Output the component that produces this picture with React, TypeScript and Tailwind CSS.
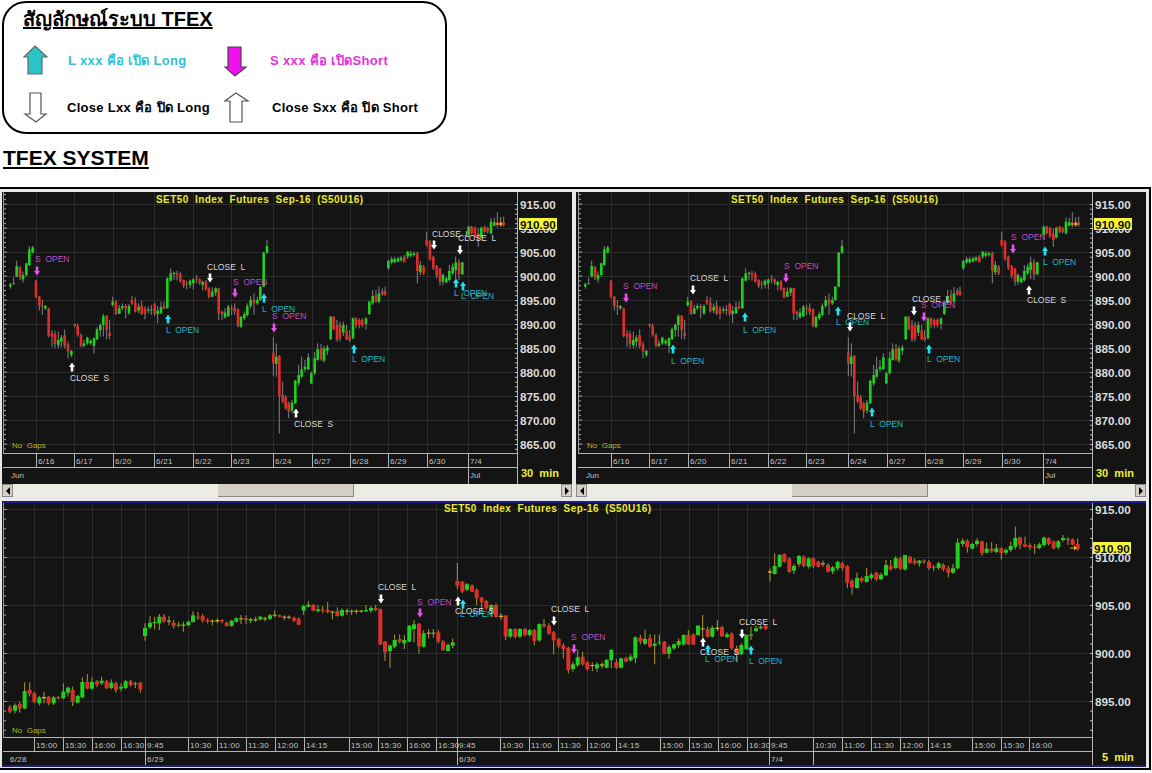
type Candle = [number, number, number, number, number, string];
type Mark = [string, number, number, number, number];

// candle rows are x, body top, body bottom, wick top, wick bottom, colour, measured on a 3x crop
const fromCrop = (rows: Candle[], ox: number, oy: number): Candle[] =>
  rows.map(([x, t, b, h, l, c]) => [ox + x / 3, oy + t / 3, oy + b / 3, oy + h / 3, oy + l / 3, c]);

const dailyCandles: Candle[] = [
  ...fromCrop(
    [
      [31, 133, 140, 128, 146, "g"], [41, 130, 131, 112, 132, "g"], [50, 78, 110, 62, 112, "g"], [60, 82, 112, 78, 120, "r"],
      [69, 105, 118, 95, 128, "g"], [79, 70, 105, 68, 110, "g"], [88, 28, 75, 18, 78, "g"], [98, 22, 38, 18, 40, "g"],
      [108, 122, 172, 120, 175, "r"], [118, 170, 198, 168, 212, "r"], [127, 197, 199, 180, 225, "r"], [136, 198, 205, 195, 210, "g"],
      [146, 205, 288, 203, 292, "r"], [156, 280, 290, 270, 322, "r"], [165, 282, 312, 272, 325, "r"], [175, 300, 316, 275, 325, "g"],
      [184, 293, 305, 285, 322, "g"], [194, 285, 318, 268, 325, "r"], [204, 313, 334, 305, 355, "r"], [214, 333, 345, 330, 352, "g"],
      [224, 253, 258, 250, 262, "r"], [233, 258, 285, 250, 290, "r"], [243, 285, 318, 280, 322, "r"], [252, 310, 318, 300, 322, "g"],
      [262, 293, 310, 290, 315, "g"], [272, 302, 310, 298, 315, "g"], [282, 295, 318, 292, 340, "g"], [291, 268, 298, 262, 300, "g"],
      [301, 255, 270, 250, 290, "g"], [310, 228, 255, 222, 290, "g"], [320, 228, 270, 225, 298, "r"], [329, 278, 288, 240, 298, "r"],
      [338, 185, 195, 170, 200, "g"], [348, 185, 222, 180, 225, "r"], [358, 205, 222, 195, 222, "g"], [367, 198, 205, 190, 210, "g"],
      [377, 198, 205, 192, 235, "r"], [387, 198, 220, 192, 225, "g"], [396, 180, 190, 168, 195, "r"], [406, 188, 215, 172, 218, "r"],
      [416, 200, 212, 190, 220, "g"], [425, 196, 222, 182, 225, "r"], [435, 205, 222, 198, 238, "r"], [445, 208, 212, 200, 220, "g"],
      [454, 208, 211, 195, 225, "g"], [464, 192, 222, 188, 228, "r"], [473, 212, 222, 198, 250, "g"], [483, 202, 220, 185, 222, "g"],
      [492, 198, 205, 185, 208, "r"], [502, 115, 205, 112, 206, "g"], [512, 100, 122, 85, 125, "g"], [522, 98, 102, 95, 120, "g"],
      [531, 100, 105, 92, 122, "r"], [541, 102, 125, 95, 128, "r"], [551, 120, 138, 118, 145, "r"], [560, 130, 132, 122, 148, "r"],
      [570, 122, 135, 118, 145, "g"], [580, 118, 130, 115, 148, "g"], [590, 115, 118, 105, 130, "r"], [599, 118, 128, 115, 135, "r"],
      [608, 125, 135, 122, 152, "g"], [618, 125, 148, 120, 152, "r"], [627, 145, 172, 142, 175, "r"], [637, 155, 170, 142, 172, "g"],
      [647, 145, 158, 142, 168, "g"], [656, 145, 220, 143, 240, "r"], [666, 215, 222, 212, 240, "r"], [675, 218, 232, 205, 236, "g"],
      [685, 200, 228, 195, 232, "g"], [695, 205, 208, 195, 225, "r"], [704, 203, 215, 190, 225, "r"], [714, 208, 258, 205, 262, "r"],
      [723, 230, 260, 228, 264, "g"], [733, 222, 235, 215, 240, "g"], [742, 198, 225, 190, 230, "g"], [752, 180, 198, 168, 205, "g"],
      [762, 178, 190, 160, 225, "r"], [772, 180, 190, 170, 195, "g"], [781, 140, 180, 138, 182, "g"], [791, 38, 140, 35, 142, "g"],
      [801, 18, 38, 0, 42, "g"], [820, 338, 370, 292, 408, "r"], [829, 350, 372, 310, 410, "g"], [838, 348, 468, 345, 580, "r"],
      [848, 465, 485, 425, 490, "r"], [857, 472, 505, 465, 510, "r"], [866, 490, 515, 485, 535, "r"], [876, 488, 512, 480, 520, "g"],
      [886, 422, 490, 420, 492, "g"], [896, 405, 430, 375, 438, "g"], [905, 388, 410, 350, 415, "g"], [915, 380, 388, 360, 395, "g"],
      [925, 352, 388, 340, 390, "g"], [934, 400, 430, 395, 432, "g"], [944, 355, 400, 335, 405, "g"], [953, 328, 360, 310, 362, "g"],
      [963, 325, 358, 312, 362, "r"], [972, 325, 362, 318, 368, "g"], [982, 322, 332, 315, 345, "g"], [992, 230, 298, 228, 300, "g"],
      [1001, 230, 268, 228, 270, "r"], [1011, 255, 300, 240, 305, "r"], [1020, 255, 295, 245, 305, "r"], [1030, 255, 278, 245, 288, "g"],
      [1040, 272, 298, 255, 300, "r"], [1049, 290, 300, 270, 305, "r"], [1059, 235, 295, 232, 298, "g"], [1068, 235, 255, 232, 265, "r"],
      [1078, 240, 255, 235, 265, "r"], [1087, 240, 255, 235, 262, "r"], [1098, 235, 252, 232, 268, "g"], [1108, 185, 222, 182, 225, "g"],
      [1118, 168, 190, 150, 195, "g"], [1128, 165, 185, 150, 188, "r"], [1137, 160, 185, 140, 190, "g"],
    ],
    0,
    240
  ),
  ...fromCrop(
    [
      [277, 318, 328, 310, 332, "r"], [285, 318, 330, 305, 332, "r"], [295, 228, 250, 225, 255, "g"], [305, 222, 232, 215, 238, "g"],
      [314, 222, 232, 215, 235, "g"], [324, 220, 230, 215, 232, "g"], [333, 218, 226, 212, 230, "g"], [343, 215, 232, 210, 232, "r"],
      [353, 200, 215, 198, 222, "g"], [362, 205, 212, 198, 218, "g"], [372, 205, 210, 200, 215, "g"], [382, 205, 258, 200, 295, "r"],
      [391, 240, 262, 228, 270, "g"], [401, 245, 265, 240, 270, "r"], [410, 165, 180, 140, 185, "r"], [420, 170, 222, 165, 228, "r"],
      [430, 215, 250, 212, 255, "r"], [440, 242, 272, 240, 280, "r"], [450, 250, 290, 248, 302, "r"], [459, 270, 290, 265, 300, "g"],
      [469, 280, 292, 275, 295, "g"], [478, 258, 285, 240, 290, "g"], [488, 245, 265, 235, 270, "g"], [497, 232, 255, 215, 282, "g"],
      [507, 232, 268, 222, 285, "r"], [517, 232, 268, 230, 270, "g"], [536, 125, 150, 122, 152, "g"], [545, 125, 145, 122, 148, "r"],
      [555, 128, 155, 125, 158, "r"], [565, 145, 165, 130, 186, "r"], [574, 128, 158, 125, 160, "g"], [584, 125, 140, 122, 145, "r"],
      [593, 130, 140, 125, 145, "r"], [603, 110, 145, 98, 148, "g"], [613, 112, 122, 98, 125, "g"], [622, 112, 120, 82, 128, "r"],
      [632, 112, 120, 96, 125, "r"], [641, 112, 120, 95, 125, "r"],
    ],
    290,
    185
  ),
];

const intradayCandles: Candle[] = [
  ...fromCrop(
    [
      [30, 352, 365, 345, 370, "r"], [45, 346, 362, 340, 370, "g"], [59, 342, 356, 335, 368, "r"], [74, 303, 355, 277, 358, "g"],
      [89, 300, 312, 277, 320, "r"], [103, 310, 336, 305, 340, "r"], [118, 322, 340, 318, 346, "g"], [132, 321, 325, 305, 340, "y"],
      [146, 320, 340, 318, 346, "r"], [161, 322, 340, 318, 345, "g"], [175, 322, 326, 318, 328, "r"], [190, 305, 325, 280, 328, "g"],
      [204, 293, 308, 290, 320, "g"], [218, 300, 336, 290, 348, "r"], [233, 318, 338, 315, 340, "g"], [247, 276, 322, 262, 325, "g"],
      [262, 275, 296, 252, 298, "r"], [276, 276, 296, 262, 300, "g"], [291, 274, 284, 270, 292, "r"], [305, 272, 280, 260, 285, "g"],
      [320, 274, 295, 270, 298, "r"], [334, 278, 294, 268, 298, "g"], [348, 280, 300, 275, 308, "r"], [363, 290, 296, 280, 304, "g"],
      [377, 274, 294, 270, 298, "g"], [392, 274, 285, 270, 290, "r"], [406, 280, 283, 275, 294, "g"], [421, 278, 299, 275, 308, "r"],
      [435, 114, 138, 100, 152, "g"], [450, 98, 112, 78, 118, "g"], [464, 96, 100, 80, 118, "g"], [478, 80, 100, 72, 120, "g"],
      [492, 80, 94, 72, 98, "r"], [507, 92, 94, 78, 106, "y"], [521, 98, 108, 90, 116, "r"], [536, 104, 106, 95, 112, "g"],
      [550, 104, 106, 95, 125, "y"], [565, 95, 106, 92, 108, "g"], [579, 76, 96, 64, 98, "g"], [594, 80, 82, 66, 90, "r"],
      [608, 78, 92, 72, 98, "r"], [623, 90, 94, 85, 100, "r"], [637, 92, 95, 88, 106, "y"], [652, 90, 94, 85, 100, "y"],
      [666, 90, 94, 88, 100, "r"], [680, 98, 108, 95, 110, "r"], [695, 92, 108, 90, 110, "g"], [709, 85, 95, 82, 98, "g"],
      [723, 85, 88, 75, 102, "y"], [738, 85, 90, 76, 102, "r"], [752, 87, 92, 84, 100, "g"], [767, 88, 90, 80, 96, "y"],
      [781, 80, 88, 78, 92, "g"], [795, 85, 88, 80, 94, "y"], [810, 76, 86, 72, 90, "g"], [824, 74, 78, 62, 82, "g"],
      [839, 76, 80, 74, 82, "r"], [853, 80, 82, 76, 90, "y"], [867, 80, 82, 76, 88, "y"], [882, 84, 92, 80, 96, "r"],
      [896, 86, 104, 82, 106, "r"], [911, 48, 62, 44, 75, "g"], [925, 44, 50, 34, 52, "g"], [940, 44, 62, 42, 64, "r"],
      [954, 58, 63, 45, 68, "g"], [968, 58, 62, 48, 70, "r"], [983, 60, 66, 36, 70, "r"], [997, 65, 68, 62, 88, "y"],
      [1012, 63, 78, 52, 80, "r"], [1026, 60, 77, 55, 80, "g"], [1041, 62, 64, 55, 75, "y"], [1055, 62, 66, 58, 75, "g"],
      [1069, 62, 65, 58, 72, "y"], [1084, 62, 65, 60, 68, "y"], [1098, 60, 64, 45, 66, "g"], [1113, 54, 62, 48, 68, "g"],
      [1127, 54, 60, 45, 64, "r"],
    ],
    0,
    590
  ),
  ...fromCrop(
    [
      [31, 163, 268, 160, 270, "r"], [45, 260, 292, 258, 318, "r"], [60, 272, 288, 268, 338, "g"], [74, 255, 275, 238, 280, "g"],
      [89, 252, 260, 238, 265, "r"], [103, 255, 265, 240, 282, "g"], [118, 212, 260, 210, 262, "g"], [132, 208, 222, 196, 262, "g"],
      [147, 206, 274, 205, 296, "r"], [161, 235, 275, 225, 278, "g"], [176, 233, 236, 222, 250, "y"], [190, 233, 236, 222, 248, "y"],
      [205, 232, 260, 225, 265, "r"], [219, 260, 285, 255, 288, "r"], [234, 270, 288, 265, 290, "g"], [248, 262, 272, 250, 280, "g"],
      [262, 78, 92, 24, 102, "r"], [277, 80, 110, 78, 115, "r"], [291, 88, 104, 84, 108, "g"], [306, 92, 110, 88, 112, "r"],
      [320, 105, 130, 100, 150, "r"], [335, 128, 142, 125, 170, "r"], [349, 138, 160, 135, 165, "r"], [364, 150, 168, 148, 185, "g"],
      [378, 150, 186, 145, 188, "r"], [393, 182, 186, 175, 195, "y"], [407, 182, 245, 180, 255, "r"], [421, 222, 245, 220, 250, "g"],
      [436, 222, 245, 220, 250, "r"], [450, 222, 245, 220, 250, "g"], [465, 222, 240, 218, 245, "r"], [479, 225, 240, 222, 245, "g"],
      [493, 226, 258, 222, 270, "r"], [508, 207, 256, 205, 260, "g"], [522, 208, 214, 192, 218, "r"], [537, 212, 236, 205, 240, "r"],
      [551, 232, 256, 228, 298, "r"], [566, 252, 274, 248, 280, "r"], [580, 272, 282, 265, 310, "r"], [595, 278, 346, 275, 355, "r"],
      [609, 328, 342, 320, 350, "g"], [623, 307, 330, 285, 335, "g"], [638, 305, 328, 290, 332, "r"], [652, 322, 342, 318, 346, "r"],
      [667, 330, 333, 322, 348, "y"], [681, 328, 340, 322, 350, "g"], [696, 328, 332, 322, 340, "y"], [710, 315, 338, 312, 340, "g"],
      [724, 285, 315, 282, 340, "g"], [739, 322, 338, 312, 342, "r"], [753, 310, 338, 308, 340, "g"], [768, 310, 320, 305, 322, "r"],
      [782, 305, 316, 298, 320, "g"], [796, 247, 310, 244, 325, "g"], [811, 248, 260, 240, 268, "r"], [825, 252, 266, 224, 270, "g"],
      [840, 250, 275, 238, 278, "r"], [854, 266, 273, 238, 328, "g"], [868, 262, 265, 238, 270, "g"], [883, 260, 297, 258, 298, "r"],
      [897, 276, 296, 270, 312, "g"], [912, 268, 280, 265, 285, "g"], [926, 258, 270, 250, 278, "g"], [941, 240, 268, 238, 272, "g"],
      [955, 240, 268, 225, 270, "r"], [970, 238, 268, 235, 270, "r"], [984, 212, 240, 210, 242, "g"], [998, 220, 222, 180, 248, "y"],
      [1013, 222, 245, 215, 248, "r"], [1027, 218, 245, 212, 248, "g"], [1042, 218, 222, 195, 228, "y"], [1056, 216, 244, 212, 246, "r"],
      [1071, 238, 246, 232, 250, "g"], [1085, 236, 280, 232, 284, "r"], [1100, 280, 298, 272, 320, "r"], [1114, 270, 298, 265, 300, "g"],
      [1129, 240, 282, 238, 285, "g"], [1143, 238, 242, 215, 255, "g"], [1158, 220, 228, 212, 230, "g"], [1172, 215, 220, 210, 224, "g"],
      [1187, 212, 222, 208, 225, "r"],
    ],
    370,
    555
  ),
  ...fromCrop(
    [
      [30, 214, 218, 205, 245, "y"], [44, 198, 222, 160, 224, "g"], [59, 165, 200, 162, 202, "g"], [73, 162, 186, 160, 188, "r"],
      [88, 176, 216, 172, 218, "r"], [102, 198, 212, 192, 222, "g"], [117, 168, 192, 165, 200, "g"], [131, 170, 198, 166, 202, "r"],
      [146, 175, 200, 172, 206, "g"], [160, 175, 198, 172, 204, "r"], [175, 185, 200, 182, 202, "r"], [189, 190, 193, 182, 200, "y"],
      [204, 195, 215, 190, 218, "r"], [218, 202, 214, 198, 222, "g"], [233, 186, 205, 182, 212, "g"], [247, 190, 204, 185, 212, "r"],
      [262, 198, 248, 196, 265, "r"], [276, 242, 262, 238, 284, "r"], [291, 234, 264, 218, 266, "g"], [305, 234, 243, 230, 248, "r"],
      [320, 228, 246, 204, 248, "g"], [334, 224, 234, 218, 240, "g"], [349, 218, 238, 215, 244, "r"], [363, 224, 238, 218, 240, "g"],
      [378, 195, 226, 180, 228, "g"], [392, 197, 208, 180, 212, "r"], [407, 175, 204, 168, 208, "g"], [421, 175, 206, 170, 210, "r"],
      [435, 165, 208, 165, 212, "g"], [450, 170, 188, 168, 192, "r"], [464, 182, 190, 175, 195, "r"], [478, 182, 190, 180, 200, "g"],
      [492, 182, 186, 178, 192, "r"], [507, 186, 204, 180, 210, "r"], [521, 200, 204, 195, 212, "r"], [536, 190, 204, 186, 210, "g"],
      [550, 195, 208, 190, 214, "r"], [565, 205, 218, 198, 232, "r"], [579, 205, 218, 192, 222, "g"], [593, 128, 205, 115, 208, "g"],
      [608, 122, 132, 115, 140, "g"], [622, 122, 142, 118, 158, "r"], [637, 132, 146, 128, 148, "g"], [651, 122, 132, 115, 140, "g"],
      [666, 124, 160, 122, 168, "r"], [680, 146, 158, 128, 160, "g"], [695, 146, 154, 126, 158, "r"], [709, 145, 156, 132, 160, "g"],
      [724, 145, 160, 142, 178, "r"], [738, 150, 158, 145, 164, "g"], [752, 138, 150, 125, 155, "g"], [766, 114, 140, 80, 148, "g"],
      [780, 112, 134, 110, 148, "r"], [795, 133, 140, 110, 142, "r"], [810, 136, 142, 130, 150, "r"], [824, 140, 144, 132, 162, "r"],
      [838, 133, 144, 128, 148, "g"], [852, 113, 135, 110, 140, "g"], [866, 115, 132, 112, 136, "r"], [881, 124, 145, 122, 148, "r"],
      [895, 124, 142, 120, 148, "g"], [909, 114, 120, 105, 125, "g"], [924, 116, 120, 112, 135, "r"], [938, 118, 134, 115, 136, "r"],
      [953, 132, 148, 115, 152, "r"],
    ],
    760,
    500
  ),
];

// label, label x, label y, arrow x, arrow y
const leftMarks: Mark[] = [
  ["S  OPEN", 35, 262, 37, 271], ["CLOSE  S", 70, 381, 72, 367], ["L  OPEN", 166, 333, 168, 319],
  ["CLOSE  L", 207, 270, 210, 278], ["S  OPEN", 233, 285, 235, 293], ["L  OPEN", 262, 312, 264, 298],
  ["S  OPEN", 272, 319, 274, 328], ["CLOSE  S", 294, 427, 296, 413], ["L  OPEN", 352, 362, 354, 349],
  ["CLOSE  L", 432, 237, 434, 245], ["CLOSE  L", 458, 241, 460, 250], ["L  OPEN", 454, 296, 456, 283],
  ["L  OPEN", 461, 299, 463, 286],
];

const rightMarks: Mark[] = [
  ["S  OPEN", 48, 289, 51, 298], ["L  OPEN", 96, 364, 98, 349], ["CLOSE  L", 115, 281, 118, 290],
  ["L  OPEN", 168, 333, 170, 317], ["S  OPEN", 209, 269, 211, 278], ["L  OPEN", 261, 325, 263, 311],
  ["CLOSE  L", 272, 319, 275, 327], ["L  OPEN", 295, 427, 297, 412], ["CLOSE  L", 337, 302, 339, 311],
  ["S  OPEN", 346, 308, 349, 317], ["L  OPEN", 352, 362, 354, 349], ["S  OPEN", 436, 240, 438, 249],
  ["L  OPEN", 468, 265, 470, 251], ["CLOSE  S", 452, 303, 454, 290],
];

const bottomMarks: Mark[] = [
  ["CLOSE  L", 378, 590, 381, 599], ["S  OPEN", 417, 605, 420, 613], ["CLOSE  S", 455, 614, 458, 601],
  ["L  OPEN", 460, 617, 463, 604], ["CLOSE  L", 551, 612, 554, 621], ["S  OPEN", 571, 640, 574, 649],
  ["CLOSE  S", 700, 655, 703, 642], ["L  OPEN", 705, 662, 708, 649], ["CLOSE  L", 739, 625, 742, 634],
  ["L  OPEN", 749, 664, 751, 650],
];

const dayTicks = [
  [36, "6/16"], [74, "6/17"], [113, "6/20"], [154, "6/21"], [193, "6/22"], [231, "6/23"],
  [273, "6/24"], [312, "6/27"], [350, "6/28"], [388, "6/29"], [427, "6/30"], [468, "7/4"],
] as const;

const timeTicks = [
  [34, "15:00"], [63, "15:30"], [92, "16:00"], [121, "16:30"], [145, "9:45"], [188, "10:30"], [217, "11:00"],
  [246, "11:30"], [275, "12:00"], [304, "14:15"], [349, "15:00"], [378, "15:30"], [407, "16:00"], [436, "16:30"],
  [457, "9:45"], [500, "10:30"], [529, "11:00"], [558, "11:30"], [587, "12:00"], [616, "14:15"], [660, "15:00"],
  [689, "15:30"], [718, "16:00"], [747, "16:30"], [769, "9:45"], [813, "10:30"], [842, "11:00"], [871, "11:30"],
  [900, "12:00"], [928, "14:15"], [972, "15:00"], [1001, "15:30"], [1029, "16:00"],
] as const;

const dateTicks = [[145, "6/29"], [457, "6/30"], [769, "7/4"], [813, ""]] as const;

const Candles = ({ data, width, wick }: { data: Candle[]; width: number; wick: string }) => (
  <g>
    {data.map(([x, t, b, h, l, c], i) => (
      <g key={i}>
        <rect x={x - 0.5} y={h} width={1} height={l - h} fill={wick} />
        <rect
          x={x - width / 2}
          y={t}
          width={width}
          height={Math.max(b - t, 1)}
          fill={c === "g" ? "#1fd01f" : c === "r" ? "#dd2f29" : "#c9b92f"}
        />
      </g>
    ))}
  </g>
);

const markColor = (label: string) =>
  label.startsWith("S") ? ["#bb4fc4", "#f04ff0"] : label.startsWith("L") ? ["#1eb6c6", "#1fe3f2"] : ["#d9d9d9", "#ffffff"];

const Marks = ({ marks }: { marks: Mark[] }) => (
  <g>
    {marks.map(([label, tx, ty, ax, ay], i) => {
      const [textColor, arrowColor] = markColor(label);
      const down = !label.startsWith("L") && (label.startsWith("S") || label.endsWith("L"));
      const d = down ? 1 : -1;
      return (
        <g key={i}>
          <text x={tx} y={ty} fill={textColor} className="whitespace-pre text-[8.5px]">
            {label}
          </text>
          <polygon
            fill={arrowColor}
            points={[
              [ax - 1.3, ay - 4.5 * d],
              [ax + 1.3, ay - 4.5 * d],
              [ax + 1.3, ay],
              [ax + 3, ay],
              [ax, ay + 4.5 * d],
              [ax - 3, ay],
              [ax - 1.3, ay],
            ]
              .map((p) => p.join(","))
              .join(" ")}
          />
        </g>
      );
    })}
  </g>
);

const PriceAxis = ({ x, top, scale, prices, minorStep, bottom }: { x: number; top: number; scale: number; prices: number[]; minorStep: number; bottom: number }) => {
  const ticks: number[] = [];
  for (let y = top; y < bottom; y += minorStep) ticks.push(y);
  return (
    <g>
      {ticks.map((y) => (
        <rect key={y} x={x - 2} y={y} width={3} height={1} fill="#bdbdbd" />
      ))}
      {prices.map((p) => {
        const y = top + (915 - p) * scale;
        return (
          <text key={p} x={x + 3} y={y + 4.5} fill="#dcdcdc" className="text-[11.7px] font-bold">
            {p.toFixed(2)}
          </text>
        );
      })}
    </g>
  );
};

const LastPrice = ({ x, y }: { x: number; y: number }) => (
  <g>
    <rect x={x - 23} y={y - 0.5} width={5} height={1} fill="#c9b92f" />
    <polygon points={`${x - 19},${y - 2.5} ${x - 16},${y} ${x - 19},${y + 2.5}`} fill="#c9b92f" />
    <rect x={x} y={y - 6} width={38} height={12} fill="#f5f53a" />
    <text x={x + 1} y={y + 4.5} fill="#111111" className="text-[11.7px] font-bold">
      910.90
    </text>
  </g>
);

const DailyChart = ({ marks, viewBox }: { marks: Mark[]; viewBox: string }) => {
  const prices = [915, 910, 905, 900, 895, 890, 885, 880, 875, 870, 865];
  return (
    <svg viewBox={viewBox} className="block h-[292px] w-[570px]">
      {prices.map((p) => (
        <rect key={p} x={4} y={204 + (915 - p) * 4.8} width={513} height={1} fill="#2c2c2c" />
      ))}
      {dayTicks.map(([x]) => (
        <rect key={x} x={x} y={192} width={1} height={261} fill="#2c2c2c" />
      ))}
      <rect x={3} y={192} width={1} height={261} fill="#9a9a9a" />
      {Array.from({ length: 54 }, (_, i) => (
        <rect key={i} x={4} y={194 + i * 4.8} width={i % 5 === 2 ? 3 : 2} height={1} fill="#a8a8a8" />
      ))}
      <text x={156} y={203} fill="#e9e92f" textLength={207} lengthAdjust="spacing" className="whitespace-pre text-[10px] font-bold">
        SET50  Index  Futures  Sep-16  (S50U16)
      </text>
      <text x={12} y={448} fill="#b5b522" className="whitespace-pre text-[8px]">
        No  Gaps
      </text>
      <Candles data={dailyCandles} width={2.6} wick="#808080" />
      <Marks marks={marks} />
      <rect x={3} y={453} width={514} height={1} fill="#b4b4b4" />
      <rect x={3} y={467} width={514} height={1} fill="#b4b4b4" />
      {dayTicks.map(([x, label]) => (
        <g key={label}>
          <rect x={x} y={453} width={1} height={14} fill="#b4b4b4" />
          <text x={x + 2} y={464} fill="#c4c4c4" className="text-[8px] tracking-[0.3px]">
            {label}
          </text>
        </g>
      ))}
      <text x={11} y={478} fill="#c4c4c4" className="text-[8px]">
        Jun
      </text>
      <rect x={468} y={468} width={1} height={16} fill="#b4b4b4" />
      <text x={470} y={478} fill="#c4c4c4" className="text-[8px]">
        Jul
      </text>
      <rect x={517} y={192} width={1} height={292} fill="#b4b4b4" />
      <PriceAxis x={517} top={204} scale={4.8} prices={prices} minorStep={4.8} bottom={450} />
      <LastPrice x={519} y={224} />
      <text x={521} y={477} fill="#efef33" className="whitespace-pre text-[11px] font-bold">
        30  min
      </text>
    </svg>
  );
};

const IntradayChart = () => {
  const prices = [915, 910, 905, 900, 895];
  return (
    <svg viewBox="2 503 1144 262" className="block h-[262px] w-[1144px]">
      {prices.map((p) => (
        <rect key={p} x={4} y={509 + (915 - p) * 9.6} width={1088} height={1} fill="#2c2c2c" />
      ))}
      {timeTicks.map(([x]) => (
        <rect key={x} x={x} y={503} width={1} height={234} fill="#2c2c2c" />
      ))}
      <rect x={3} y={503} width={1} height={234} fill="#9a9a9a" />
      {Array.from({ length: 24 }, (_, i) => (
        <rect key={i} x={4} y={509 + i * 9.6} width={i % 5 === 0 ? 3 : 2} height={1} fill="#a8a8a8" />
      ))}
      <text x={444} y={512} fill="#e9e92f" textLength={207} lengthAdjust="spacing" className="whitespace-pre text-[10px] font-bold">
        SET50  Index  Futures  Sep-16  (S50U16)
      </text>
      <text x={12} y={733} fill="#b5b522" className="whitespace-pre text-[8px]">
        No  Gaps
      </text>
      <Candles data={intradayCandles} width={4} wick="#a99a2c" />
      <Marks marks={bottomMarks} />
      <rect x={3} y={737} width={1089} height={1} fill="#b4b4b4" />
      <rect x={3} y={751} width={1089} height={1} fill="#b4b4b4" />
      {timeTicks.map(([x, label]) => (
        <g key={x}>
          <rect x={x} y={737} width={1} height={14} fill="#b4b4b4" />
          <text x={x + 2} y={748} fill="#c4c4c4" className="text-[8px] tracking-[0.3px]">
            {label}
          </text>
        </g>
      ))}
      <text x={10} y={762} fill="#c4c4c4" className="text-[8px] tracking-[0.3px]">
        6/28
      </text>
      {dateTicks.map(([x, label]) => (
        <g key={x}>
          <rect x={x} y={752} width={1} height={13} fill="#b4b4b4" />
          <text x={x + 2} y={762} fill="#c4c4c4" className="text-[8px] tracking-[0.3px]">
            {label}
          </text>
        </g>
      ))}
      <rect x={1092} y={503} width={1} height={262} fill="#b4b4b4" />
      <PriceAxis x={1092} top={509} scale={9.6} prices={prices} minorStep={9.6} bottom={737} />
      <LastPrice x={1093} y={548} />
      <text x={1102} y={761} fill="#efef33" className="whitespace-pre text-[11px] font-bold">
        5  min
      </text>
    </svg>
  );
};

const Scrollbar = () => (
  <div className="flex h-[13px] bg-[#ecebe4]">
    <div className="flex w-[11px] items-center justify-center border border-[#8a8a84] bg-[#d4d0c8] text-[#111]">
      <div className="h-0 w-0 border-y-[4px] border-r-[4px] border-y-transparent border-r-black" />
    </div>
    <div className="ml-[205px] h-full w-[136px] border-r border-b border-[#8a8a84] bg-[#d4d0c8]" />
    <div className="ml-auto flex w-[11px] items-center justify-center border border-[#8a8a84] bg-[#d4d0c8]">
      <div className="h-0 w-0 border-y-[4px] border-l-[4px] border-y-transparent border-l-black" />
    </div>
  </div>
);

const Panel = ({ marks, viewBox }: { marks: Mark[]; viewBox: string }) => (
  <div className="h-[305px] w-[570px] bg-[#141414]">
    <DailyChart marks={marks} viewBox={viewBox} />
    <Scrollbar />
  </div>
);

const BlockArrow = ({ points, fill, stroke }: { points: string; fill: string; stroke: string }) => (
  <svg viewBox="0 0 26 32" className="h-8 w-[26px]">
    <polygon points={points} fill={fill} stroke={stroke} strokeWidth="1.2" />
  </svg>
);

export default function App() {
  return (
    <div className="h-[773px] w-[1152px] overflow-hidden bg-white pt-px font-['Liberation_Sans','Noto_Sans',sans-serif] text-black">
      <div className="ml-[2px] h-[133px] w-[445px] rounded-[24px] border-2 border-black pl-[19px]">
        <div className="mt-[3px] h-[26px] text-[20px] leading-[26px] font-bold underline">สัญลักษณ์ระบบ TFEX</div>
        <div className="mt-[13px] grid grid-cols-[45px_156px_46px_1fr] items-center text-[13px] font-bold tracking-[0.35px]">
          <BlockArrow points="12,1 24,12 19,12 19,29 5,29 5,12 0.8,12" fill="#2cc4c8" stroke="#666" />
          <div className="text-[#35bfd2]">L xxx คือ เปิด Long</div>
          <BlockArrow points="4,2 17,2 17,22 22,22 11,31 0.8,22 4,22" fill="#f211ee" stroke="#444" />
          <div className="text-[#e034dc]">S xxx คือ เปิดShort</div>
        </div>
        <div className="mt-[15px] grid grid-cols-[45px_156px_46px_1fr] items-center text-[13px] font-bold tracking-[0.3px]">
          <BlockArrow points="7,1 18,1 18,22 23,22 13,30 2,22 7,22" fill="#ffffff" stroke="#555" />
          <div className="-ml-px whitespace-nowrap">Close Lxx คือ ปิด Long</div>
          <BlockArrow points="12,1 24,9 18,9 18,30 6,30 6,9 0.8,9" fill="#ffffff" stroke="#555" />
          <div className="ml-[2px] whitespace-nowrap">Close Sxx คือ ปิด Short</div>
        </div>
      </div>
      <h1 className="mt-[12px] ml-[3px] h-6 text-[21px] leading-6 font-bold underline">TFEX SYSTEM</h1>
      <div className="mt-[17px] h-[583px] w-[1151px] border-y-2 border-r-2 border-black bg-[#e8e8e8] pt-[3px] pl-[2px]">
        <div className="flex gap-[4px]">
          <Panel marks={leftMarks} viewBox="2 192 570 292" />
          <Panel marks={rightMarks} viewBox="1 192 570 292" />
        </div>
        <div className="mt-[4px] h-[266px] w-[1144px] border-y-2 border-[#1c1c8c] bg-[#141414]">
          <IntradayChart />
        </div>
      </div>
    </div>
  );
}
